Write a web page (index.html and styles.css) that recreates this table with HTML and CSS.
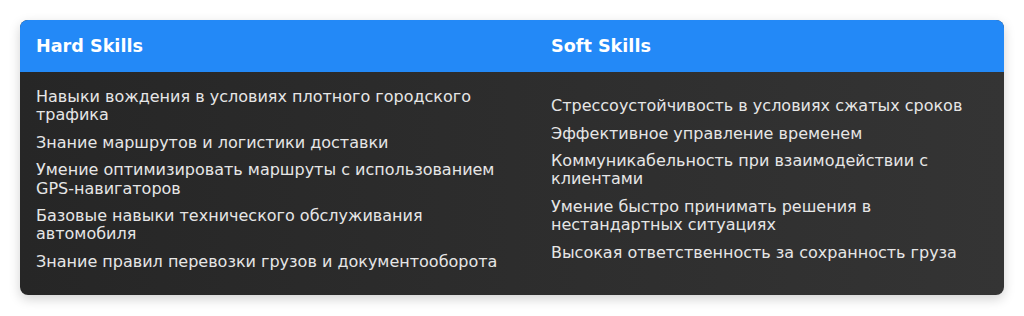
FILE: index.html
```html
<!DOCTYPE html>
<html lang="ru">
<head>
<meta charset="utf-8">
<link rel="stylesheet" href="styles.css">
</head>
<body>
<div class="card">
  <div class="head">Hard Skills</div>
  <div class="head">Soft Skills</div>
  <div class="cell">
    <ul>
      <li>Навыки вождения в условиях плотного городского трафика</li>
      <li>Знание маршрутов и логистики доставки</li>
      <li>Умение оптимизировать маршруты с использованием GPS-навигаторов</li>
      <li>Базовые навыки технического обслуживания автомобиля</li>
      <li>Знание правил перевозки грузов и документооборота</li>
    </ul>
  </div>
  <div class="cell">
    <ul>
      <li>Стрессоустойчивость в условиях сжатых сроков</li>
      <li>Эффективное управление временем</li>
      <li>Коммуникабельность при взаимодействии с клиентами</li>
      <li>Умение быстро принимать решения в нестандартных ситуациях</li>
      <li>Высокая ответственность за сохранность груза</li>
    </ul>
  </div>
</div>
</body>
</html>
```
FILE: styles.css
```css
html, body { margin: 0; padding: 0; background: #ffffff; }
body { padding: 20px; font-family: "DejaVu Sans", sans-serif; }
.card {
  display: grid;
  grid-template-columns: 515px 1fr;
  border-radius: 8px;
  overflow: hidden;
  background: linear-gradient(to right, #262626, #343434);
  box-shadow: 0 4px 12px rgba(0,0,0,0.18);
}
.head {
  background: #2389f7;
  color: #ffffff;
  font-weight: bold;
  font-size: 17.6px;
  height: 52px;
  display: flex;
  align-items: center;
  padding: 0 16px;
}
.cell {
  align-self: center;
  padding: 16px 16px 16px 16px;
  color: #e6e6e6;
  font-size: 16px;
  line-height: 18.4px;
}
ul { list-style: none; margin: 0 0 8px 0; padding: 0; }
li { margin: 0 0 9px 0; }
li:last-child { margin-bottom: 0; }
```
